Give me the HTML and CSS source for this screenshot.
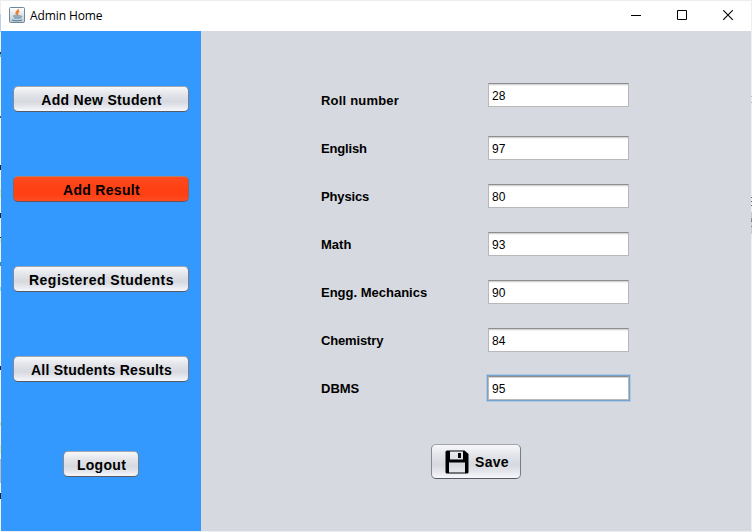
FILE: index.html
```html
<!DOCTYPE html>
<html lang="en">
<head>
<meta charset="utf-8">
<title>Admin Home</title>
<link rel="stylesheet" href="styles.css">
</head>
<body>
<div class="window">
  <header class="titlebar">
    <svg class="app-icon" width="16" height="16" viewBox="0 0 16 16" fill="none">
      <defs><linearGradient id="tile" x2="0" y2="1"><stop stop-color="#fff"/><stop offset="1" stop-color="#bdc9d1"/></linearGradient></defs>
      <rect x=".5" y=".5" width="15" height="15" rx="1" fill="url(#tile)" stroke="#6f8796"/>
      <path d="M9.300 2C10 4 5.500 4.500 7.500 7.800M10.300 4.200C7.500 5.300 9.700 6.200 8.300 8" stroke="#e87925" stroke-width="1.300"/>
      <path d="M4 9h7M5 11h6M11.300 9c2-.4 1.700 1.300-.3 2M3 13c2 1 8 1 10 0" stroke="#497c9c" stroke-width="1"/>
    </svg>
    <h1 class="title">Admin Home</h1>
    <div class="controls">
      <svg width="11" height="11" viewBox="0 0 11 11"><path d="M0 5.500h10" stroke="#000"/></svg>
      <svg width="11" height="11" viewBox="0 0 11 11"><path d="M.5.500h9v9h-9z" fill="none" stroke="#000"/></svg>
      <svg width="11" height="11" viewBox="0 0 11 11"><path d="M.2.200l9.600 9.600M9.800.200L.2 9.800" stroke="#000" stroke-width="1.100"/></svg>
    </div>
  </header>
  <div class="content">
    <nav class="sidebar">
      <button class="btn add-student">Add New Student</button>
      <button class="btn active">Add Result</button>
      <button class="btn registered">Registered Students</button>
      <button class="btn results">All Students Results</button>
      <button class="btn logout">Logout</button>
    </nav>
    <main class="panel">
      <div class="form">
        <label class="row first"><span class="label wide">Roll number</span><input class="field" value="28"></label>
        <label class="row"><span class="label tight">English</span><input class="field" value="97"></label>
        <label class="row"><span class="label tight">Physics</span><input class="field" value="80"></label>
        <label class="row"><span class="label">Math</span><input class="field" value="93"></label>
        <label class="row"><span class="label">Engg. Mechanics</span><input class="field" value="90"></label>
        <label class="row"><span class="label tight">Chemistry</span><input class="field" value="84"></label>
        <label class="row"><span class="label">DBMS</span><input class="field focused" value="95"></label>
      </div>
      <button class="btn save">
        <svg width="24" height="24" viewBox="0 0 24 24">
          <path fill="#000" fill-rule="evenodd" d="M2 .5h17.500L23.500 4v18q0 1.500-1.500 1.500H2Q.5 23.500.5 22V2Q.5.500 2 .500zM5 1.500v8h13v-8zM4 12.500v10h16v-10z"/>
          <path fill="#000" d="M13 3h3v5h-3zM1 20h3v3h-3zM20 20h3v3h-3z"/>
        </svg>
        <span>Save</span>
      </button>
    </main>
  </div>
</div>
</body>
</html>
```
FILE: styles.css
```css
* { box-sizing: border-box; }

body {
  margin: 0;
  width: 752px;
  height: 532px;
  padding: 1px;
  overflow: hidden;
  font-family: "Liberation Sans", Arial, sans-serif;
  color: #000;
  background:
    linear-gradient(#eee 14px, #b9cfec 14px 32px, #f2f2f2 32px 52px, #4a2b2b 52px 54px, #6fb0c8 54px 57px,
      #f2f2f2 57px 116px, #555 116px 118px, #f2f2f2 118px 165px, #222 165px 170px, #f2f2f2 170px 189px,
      #e8e89a 189px 198px, #f2f2f2 198px 213px, #222 213px 218px, #f2f2f2 218px 237px, #222 237px 238px,
      #e8e89a 238px 243px, #f2f2f2 243px 262px, #3b8aa0 262px 266px, #f2f2f2 266px 287px, #9cdce0 287px 291px,
      #f2f2f2 291px 366px, #401030 366px 370px, #f2f2f2 370px 422px, #e0e08c 422px 426px, #f2f2f2 426px 445px,
      #e8e89a 445px 454px, #f2f2f2 454px 459px, #bbb 459px 483px, #f2f2f2 483px 493px, #222 493px 499px, #f2f2f2 499px) 0 0 / 1px 100% no-repeat,
    linear-gradient(#eee 96px, #bbb 96px 97px, #eee 97px 102px, #bbb 102px 103px, #eee 103px 197px,
      #666 197px 198px, #eee 198px 201px, #666 201px 202px, #eee 202px 205px, #666 205px 206px, #eee 206px 212px,
      #c8c8c8 212px 218px, #a89084 218px 220px, #5c86a8 220px 222px, #ccc 222px 226px, #888 226px 227px,
      #ccc 227px 234px, #eee 234px) 100% 0 / 1px 100% no-repeat,
    #ededed;
}

.window {
  display: flex;
  flex-direction: column;
  width: 750px;
  height: 530px;
}

.titlebar {
  display: flex;
  align-items: center;
  height: 30px;
  padding: 0 17px 0 8px;
  background: #fff;
}

.app-icon { margin-top: -2px; }

.title {
  margin: 0 0 0 5px;
  font: 12px/18px "Open Sans", "Noto Sans", sans-serif;
  letter-spacing: -0.1px;
}

.controls {
  display: flex;
  gap: 35px;
  margin-left: auto;
}

.controls svg { display: block; margin-top: -2px; }

.content { display: flex; height: 500px; }

.sidebar {
  display: flex;
  flex-direction: column;
  align-items: center;
  gap: 64px;
  width: 200px;
  padding-top: 55px;
  background: #3399ff;
}

.btn {
  display: flex;
  align-items: center;
  justify-content: center;
  width: 176px;
  height: 26px;
  padding: 1px 0 0 1px;
  border: 1px solid;
  border-color: #a2a6ad #777c85 #555a63 #858a93;
  border-radius: 5px;
  background: linear-gradient(#f8f8fa, #e3e5ea 30%, #d6d9df 60%, #e2e4ea 78%, #f6f8fc);
  font: bold 14px/18px "Liberation Sans", Arial, sans-serif;
  letter-spacing: 0.3px;
  color: #000;
  white-space: nowrap;
}

.registered { letter-spacing: 0.46px; }

.results { letter-spacing: 0.25px; }

.active {
  border-color: #b18166 #95644e #665059 #95644e;
  background: linear-gradient(#ff4b20, #ff4014 50%, #ff4015 75%, #ff4d22);
}

.logout { width: 76px; margin-top: 5px; }

.panel { width: 550px; background: #d6d9df; }

.form { padding: 52px 0 0 120px; }

.row { display: flex; height: 48px; }

.row.first { height: 53px; }

.label {
  width: 167px;
  padding-top: 5px;
  font: bold 13px/16px "Liberation Sans", Arial, sans-serif;
}

.row.first .label { padding-top: 10px; }

.label.wide { letter-spacing: 0.2px; }

.label.tight { letter-spacing: -0.15px; }

.field {
  width: 141px;
  height: 24px;
  padding: 2px 3px 0;
  border: 1px solid #b8b8b8;
  border-top-color: #8d8d8d;
  border-radius: 0;
  outline: none;
  background: #fff;
  box-shadow: inset 0 1px #d5d5d5, inset 0 2px #f2f2f2;
  font: 12px/16px "Liberation Sans", Arial, sans-serif;
  color: #000;
}

.focused { box-shadow: 0 0 0 1px #73a4d1, 0 0 0 2px #b3c8df, inset 0 1px #d5d5d5; }

.save {
  gap: 6px;
  width: 90px;
  height: 35px;
  margin: 20px 0 0 230px;
  padding: 0 0 0 2px;
}
```
